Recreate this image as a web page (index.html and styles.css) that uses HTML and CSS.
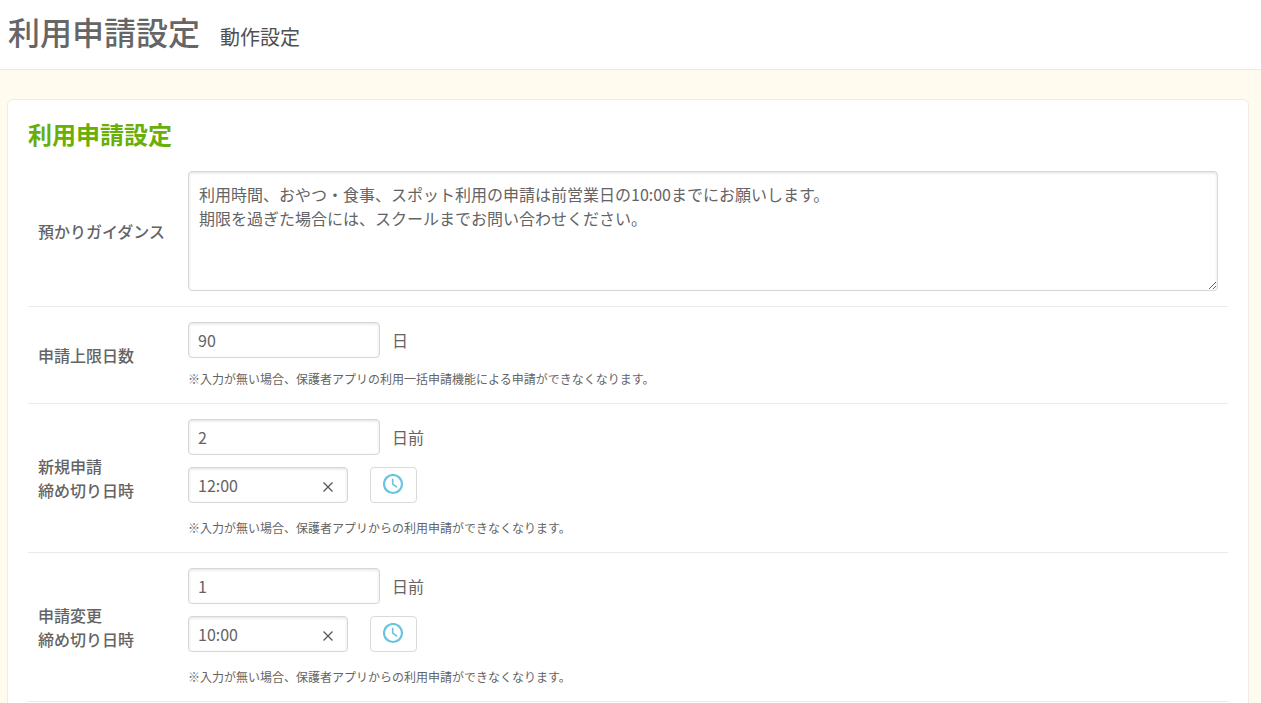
FILE: index.html
```html
<!DOCTYPE html>
<html lang="ja">
<head>
<meta charset="utf-8">
<title>利用申請設定</title>
<link rel="stylesheet" href="styles.css">
</head>
<body>
<header class="page-header">
  <h1 class="page-title">利用申請設定</h1>
  <span class="page-subtitle">動作設定</span>
</header>
<main class="content">
  <form class="card">
    <h2 class="card-title">利用申請設定</h2>
    <div class="row">
      <label class="row-label" for="guidance">預かりガイダンス</label>
      <div class="row-body">
        <textarea class="field guidance" id="guidance">利用時間、おやつ・食事、スポット利用の申請は前営業日の10:00までにお願いします。
期限を過ぎた場合には、スクールまでお問い合わせください。</textarea>
      </div>
    </div>
    <div class="row">
      <label class="row-label" for="limit">申請上限日数</label>
      <div class="row-body">
        <div class="line"><input class="field days" id="limit" type="text" value="90"><span>日</span></div>
        <p class="note">※入力が無い場合、保護者アプリの利用一括申請機能による申請ができなくなります。</p>
      </div>
    </div>
    <div class="row">
      <label class="row-label" for="new-days">新規申請<br>締め切り日時</label>
      <div class="row-body">
        <div class="line"><input class="field days" id="new-days" type="text" value="2"><span>日前</span></div>
        <div class="line time-line">
          <div class="time-box">
            <input class="field time" type="text" value="12:00" aria-label="新規申請 締め切り時刻">
            <button class="clear" type="button" aria-label="クリア"><svg width="10" height="10" viewBox="0 0 10 10"><path d="M0.5 0.5l9 9M9.5 0.5l-9 9"/></svg></button>
          </div>
          <button class="clock" type="button" aria-label="時刻を選択"><svg width="21" height="21" viewBox="0 0 21 21"><circle cx="10" cy="10" r="9"/><path class="hands" d="M9.7 4.8V10.2l4.4 3.2"/></svg></button>
        </div>
        <p class="note time-note">※入力が無い場合、保護者アプリからの利用申請ができなくなります。</p>
      </div>
    </div>
    <div class="row">
      <label class="row-label" for="change-days">申請変更<br>締め切り日時</label>
      <div class="row-body">
        <div class="line"><input class="field days" id="change-days" type="text" value="1"><span>日前</span></div>
        <div class="line time-line">
          <div class="time-box">
            <input class="field time" type="text" value="10:00" aria-label="申請変更 締め切り時刻">
            <button class="clear" type="button" aria-label="クリア"><svg width="10" height="10" viewBox="0 0 10 10"><path d="M0.5 0.5l9 9M9.5 0.5l-9 9"/></svg></button>
          </div>
          <button class="clock" type="button" aria-label="時刻を選択"><svg width="21" height="21" viewBox="0 0 21 21"><circle cx="10" cy="10" r="9"/><path class="hands" d="M9.7 4.8V10.2l4.4 3.2"/></svg></button>
        </div>
        <p class="note time-note">※入力が無い場合、保護者アプリからの利用申請ができなくなります。</p>
      </div>
    </div>
  </form>
</main>
</body>
</html>
```
FILE: styles.css
```css
* { box-sizing: border-box; }
html { scrollbar-width: none; }
body {
  margin: 0;
  background: #fffbee;
  color: #646464;
  font: 16px/24px "Noto Sans CJK JP", sans-serif;
}
.page-header {
  display: flex;
  align-items: baseline;
  gap: 20px;
  padding: 6px 8px 13px;
  background: #fff;
  border-bottom: 1px solid #e7eaec;
}
.page-title { margin: 0; font-size: 32px; line-height: 50px; font-weight: 500; color: #666; }
.page-subtitle { font-size: 20px; color: #505050; }
.content { padding: 29px 12px 20px 7px; }
.card {
  padding: 18px 20px 20px;
  background: #fff;
  border: 1px solid #eeece4;
  border-radius: 6px;
}
.card-title { margin: 0; font-size: 24px; line-height: 32px; font-weight: 700; color: #6aae08; }
.row {
  display: grid;
  grid-template-columns: 150px 1fr;
  align-items: center;
  padding: 15px 10px;
  border-bottom: 1px solid #e7eaec;
}
.card-title + .row { padding-top: 21px; }
.row-label { font-weight: 500; }
.row-body { min-width: 0; }
.field {
  display: block;
  height: 36px;
  padding: 0 9px;
  border: 1px solid #d5d7d9;
  border-radius: 4px;
  background: #fff;
  box-shadow: inset 0 1px 3px rgba(0, 0, 0, 0.12);
  color: #646464;
  font: inherit;
}
.guidance { width: 100%; height: 120px; padding: 10px; resize: both; }
.days { width: 192px; }
.line { display: flex; align-items: center; gap: 12px; }
.time-line { margin-top: 12px; gap: 22px; }
.time-box { position: relative; }
.time { width: 160px; }
.clear {
  position: absolute;
  right: 14px;
  top: 14px;
  width: 12px;
  height: 12px;
  padding: 1px;
  border: 0;
  background: none;
}
.clear svg, .clock svg { display: block; fill: none; }
.clear svg { stroke: #555; stroke-width: 1.3; }
.clock {
  width: 47px;
  height: 36px;
  padding: 0 0 1px;
  display: grid;
  place-items: center;
  border: 1px solid #d9dadb;
  border-radius: 4px;
  background: #fff;
}
.clock svg { stroke: #6bc3e0; stroke-width: 2.2; }
.clock .hands { stroke-width: 1.6; }
.note { margin: 12px 0 0; font-size: 12px; line-height: 18px; }
.time-note { margin-top: 16px; }
```
